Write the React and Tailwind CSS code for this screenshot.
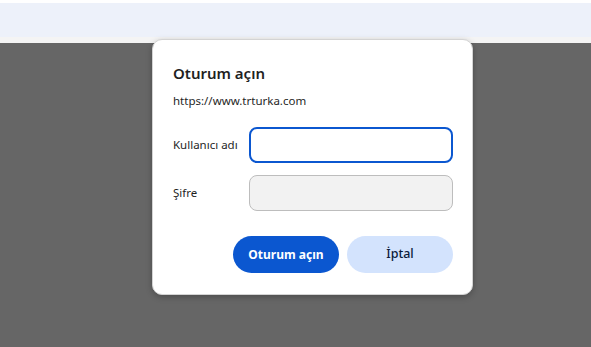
export default function App() {
  const font = { fontFamily: '"Noto Sans", "Open Sans", Arial, sans-serif' };
  return (
    <div className="relative w-[591px] h-[347px] overflow-hidden bg-white" style={font}>
      <div className="flex flex-col h-full">
        <div className="h-[3px] bg-white" />
        <div className="h-[34px] bg-[#edf1fa]" />
        <div className="h-[6px] bg-[#f4f4f4]" />
        <div className="flex-1 bg-[#666666]" />
      </div>
      <div className="absolute left-[152px] top-[39px] w-[321px] h-[256px] bg-white rounded-[10px] border border-[#d4d4d4] shadow-[0_2px_6px_rgba(0,0,0,0.25)] pt-[23px] pl-[20px] pr-[19px] flex flex-col">
        <div className="text-[15px] leading-[20px] font-semibold text-[#1f1f1f]">Oturum açın</div>
        <div className="mt-[10px] text-[11.5px] leading-[16px] text-[#1f1f1f]">https://www.trturka.com</div>
        <div className="mt-[18px] flex items-center">
          <div className="w-[76px] text-[11.5px] text-[#1f1f1f]">Kullanıcı adı</div>
          <div className="flex-1 h-[36px] rounded-[8px] border-2 border-[#0b57d0] bg-white" />
        </div>
        <div className="mt-[12px] flex items-center">
          <div className="w-[76px] text-[11.5px] text-[#1f1f1f]">Şifre</div>
          <div className="flex-1 h-[36px] rounded-[8px] border border-[#bdbdbd] bg-[#f2f2f2]" />
        </div>
        <div className="mt-[25px] flex justify-end gap-[8px]">
          <button className="w-[106px] h-[37px] rounded-full bg-[#0b57d0] text-white text-[12px] font-bold">Oturum açın</button>
          <button className="w-[106px] h-[37px] rounded-full bg-[#d3e3fd] text-[#0a1a3a] text-[12.5px] font-medium">İptal</button>
        </div>
      </div>
    </div>
  );
}
